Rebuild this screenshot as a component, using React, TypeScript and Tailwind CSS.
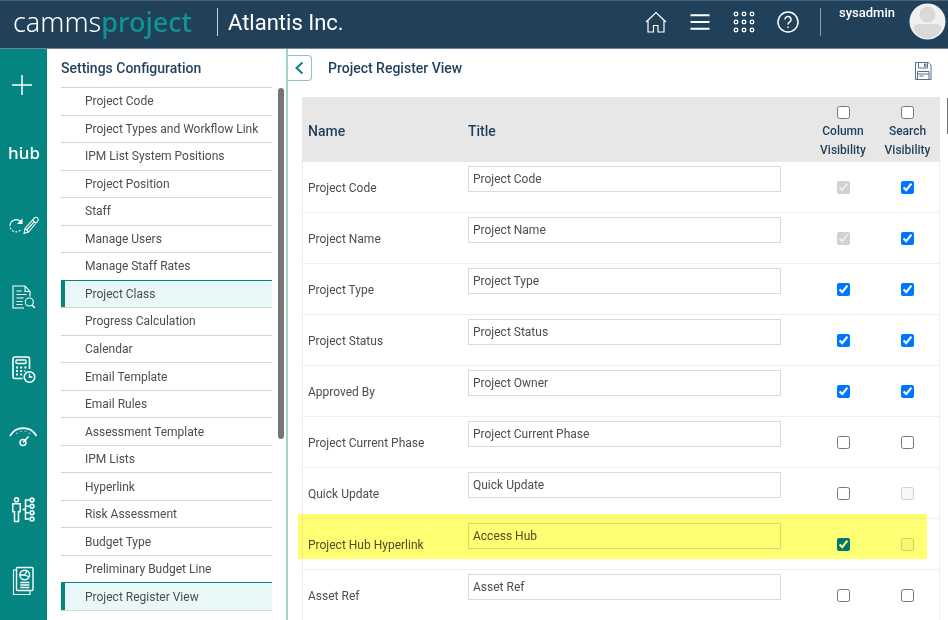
import type { ReactNode } from "react";

type Row = {
  name: string;
  title: string;
  column: boolean;
  search: boolean;
  columnLocked?: boolean;
  searchLocked?: boolean;
  highlighted?: boolean;
};

const SETTINGS = [
  "Project Code",
  "Project Types and Workflow Link",
  "IPM List System Positions",
  "Project Position",
  "Staff",
  "Manage Users",
  "Manage Staff Rates",
  "Project Class",
  "Progress Calculation",
  "Calendar",
  "Email Template",
  "Email Rules",
  "Assessment Template",
  "IPM Lists",
  "Hyperlink",
  "Risk Assessment",
  "Budget Type",
  "Preliminary Budget Line",
  "Project Register View",
];

const ACTIVE = ["Project Class", "Project Register View"];

const ROWS: Row[] = [
  { name: "Project Code", title: "Project Code", column: true, search: true, columnLocked: true },
  { name: "Project Name", title: "Project Name", column: true, search: true, columnLocked: true },
  { name: "Project Type", title: "Project Type", column: true, search: true },
  { name: "Project Status", title: "Project Status", column: true, search: true },
  { name: "Approved By", title: "Project Owner", column: true, search: true },
  { name: "Project Current Phase", title: "Project Current Phase", column: false, search: false },
  { name: "Quick Update", title: "Quick Update", column: false, search: false, searchLocked: true },
  {
    name: "Project Hub Hyperlink",
    title: "Access Hub",
    column: true,
    search: false,
    searchLocked: true,
    highlighted: true,
  },
  { name: "Asset Ref", title: "Asset Ref", column: false, search: false },
];

export default function App() {
  return (
    <div className="flex h-screen flex-col overflow-hidden bg-white font-[Roboto,sans-serif] text-xs text-[#4d4d4d]">
      <TopBar />
      <div className="flex min-h-0 flex-1">
        <IconRail />
        <SettingsMenu />
        <RegisterView />
      </div>
    </div>
  );
}

function TopBar() {
  return (
    <header className="flex h-[49px] shrink-0 items-start border-t border-b border-t-[#47647c] border-b-[#6f8597] bg-[#21405a] text-white">
      <a
        href="#"
        className="ml-[13px] w-[204px] font-['Noto_Sans',sans-serif] text-[27px] leading-[42px]"
      >
        <span className="font-light">camms</span>
        <span className="font-medium text-[#0f9590]">project</span>
      </a>
      <span className="mt-[7px] h-7 w-px bg-[#c5ced6]" />
      <h1 className="ml-[10px] flex-1 text-[22px] leading-[44px]">Atlantis Inc.</h1>

      <nav className="flex h-[42px] items-center gap-5">
        <TopButton label="Home">
          <path d="M2 12 12 2.500 22 12M4 10.500v11.500h5.500v-6.500h4.500v6.500H20V10.500" strokeWidth="1.200" />
        </TopButton>
        <TopButton label="Menu">
          <path d="M2.500 5.300h19M2.500 12h19M2.500 18.700h19" strokeWidth="2" />
        </TopButton>
        <TopButton label="Apps">
          {[4, 12, 20].map((y) =>
            [4, 12, 20].map((x) => <circle key={`${x}-${y}`} cx={x} cy={y} r="1.800" strokeWidth="1.300" />)
          )}
        </TopButton>
        <TopButton label="Help">
          <circle cx="12" cy="12" r="10" strokeWidth="1.500" />
          <path d="M9 9.500a3 3 0 1 1 4.700 2.400c-1.200.8-1.700 1.200-1.700 2.600" strokeWidth="1.500" />
          <circle cx="12" cy="17.200" r=".5" strokeWidth="1" />
        </TopButton>
      </nav>
      <span className="mt-[7px] ml-5 h-7 w-px bg-[#8fa0ae]" />
      <span className="mt-1 ml-[18px] text-[13px] leading-4 font-medium">sysadmin</span>
      <button type="button" aria-label="Account" className="mt-[2px] mr-[2px] ml-[14px]">
        <svg viewBox="0 0 37 37" className="h-[37px] w-[37px]">
          <circle cx="18.500" cy="18.500" r="18" fill="#f0f0f0" />
          <circle cx="18.500" cy="11.500" r="8" fill="#d9d9d9" />
          <path d="M4.500 26c0-3 2.500-5 5.500-5h17c3 0 5.500 2 5.500 5-3 6-8 9.500-14 9.500S7.500 32 4.500 26z" fill="#d9d9d9" />
        </svg>
      </button>
    </header>
  );
}

function TopButton({ label, children }: { label: string; children: ReactNode }) {
  return (
    <button type="button" aria-label={label}>
      <svg viewBox="0 0 24 24" fill="none" stroke="white" className="h-6 w-6">
        {children}
      </svg>
    </button>
  );
}

function IconRail() {
  return (
    <nav className="w-[47px] shrink-0 overflow-hidden bg-[#048581] text-white">
      <RailButton label="Add" first>
        <path d="M5 18h20M15 8v20" strokeWidth="1.500" />
      </RailButton>

      {/* wordmark with a dotted "u" */}
      <button
        type="button"
        className="flex h-[72px] w-full items-center justify-center pl-px font-['Noto_Sans',sans-serif] text-[17px] font-medium"
      >
        <span>h</span>
        <span className="relative">
          u
          <span className="absolute top-[5px] left-px h-[2px] w-[2px] bg-white" />
        </span>
        <span>b</span>
      </button>

      <RailButton label="Edit progress">
        <path d="M3 17a6.200 6.200 0 0 1 10.500-4.500" />
        <path d="M3.200 18.500A6.200 6.200 0 0 0 14 20.500" strokeDasharray="2 1.500" />
        <path d="M15.500 9.500v5.500h-5.500z" fill="white" stroke="none" />
        <path d="m17 24.500 1-5L27.500 9c1-1 2.300-1 3.200 0s.8 2 0 3L21.500 23zM18 19.500l3.500 3.500M25.500 11l3.500 3.500M20 20.500l7.500-8" />
      </RailButton>

      <RailButton label="Search documents">
        <path d="M17 27H6V5h12l5 5.500v5M18 5v5.500h5" />
        <path d="M9.500 10h5M9.500 13.500h10M9.500 17h7M9.500 20.500h6M9.500 23.500h6" />
        <circle cx="22.300" cy="21" r="4" />
        <path d="m25.200 24 2.600 3" strokeWidth="1.500" />
      </RailButton>

      <RailButton label="Timesheets">
        <path d="M15.500 25.500H8a2 2 0 0 1-2-2V6a2 2 0 0 1 2-2h12.500a2 2 0 0 1 2 2v10" strokeWidth="1.600" />
        <rect x="9" y="7" width="10" height="3.500" rx="1" strokeWidth="1.400" />
        <path
          d="M9 14.500h2M13.200 14.500h2M17.400 14.500h2M9 18h2M13.200 18h2M17.400 18h1M9 21.500h2M13.200 21.500h2"
          strokeWidth="2"
        />
        <circle cx="22.500" cy="24" r="5.300" strokeWidth="1.600" />
        <path d="M22.500 20.800V24h3" strokeWidth="1.400" />
      </RailButton>

      <RailButton label="Dashboard">
        <path d="M3 11C9 .5 23.500.5 29.500 11" strokeWidth="1.600" />
        <path d="M9 8.200h2M13 6.300h2M17.500 6.300h2M21.500 8.200h2" opacity=".6" />
        <circle cx="16" cy="17.500" r="3" strokeWidth="1.400" />
        <path d="m16 17.500 5.500-6" strokeWidth="1.400" />
      </RailButton>

      <RailButton label="Resources">
        <circle cx="9.500" cy="2.700" r="2" strokeWidth="1.600" />
        <path d="M5.800 6.800h7.400v8h-1.700v9.700H7.500v-9.700H5.800z" strokeWidth="1.500" />
        <path d="M22 3h-3.500v19H22M18.500 9.300H22M18.500 15.700H22M15.500 12.500h3" strokeWidth="1.500" />
        {[3, 9.3, 15.7, 22].map((y) => (
          <circle key={y} cx="25" cy={y} r="1.900" strokeWidth="1.600" />
        ))}
      </RailButton>

      <RailButton label="Reports">
        <path d="M9.500 1H6.500v24.500h16.500V21.500" />
        <rect x="9.500" y="-1.500" width="16.500" height="23" rx="1" strokeWidth="1.400" />
        <circle cx="17.700" cy="6" r="4.800" strokeWidth="1.400" />
        <path d="M17.700 6 20 1.800M17.700 6l4.500 2M17.700 6h-4.500M13.300 13.500h9M13.300 16h9M13.300 18.500h9" strokeWidth="1.300" />
      </RailButton>
    </nav>
  );
}

function RailButton({ label, first, children }: { label: string; first?: boolean; children: ReactNode }) {
  return (
    <button
      type="button"
      aria-label={label}
      className={`flex w-full items-center justify-center ${first ? "h-[68px]" : "h-[72px]"}`}
    >
      <svg viewBox="0 -4 33 40" fill="none" stroke="white" strokeWidth="1.100" className="h-10 w-[33px]">
        {children}
      </svg>
    </button>
  );
}

function SettingsMenu() {
  return (
    <aside className="flex w-[241px] shrink-0 flex-col border-r-2 border-[#a5d0ce] pl-[14px]">
      <h2 className="py-[9px] text-sm font-medium text-[#1f3f5c]">Settings Configuration</h2>
      <div className="flex min-h-0 flex-1">
        <ul className="grid h-[524px] flex-1 auto-rows-fr border-b border-[#d4d4d4]">
          {SETTINGS.map((s) => (
            <li key={s} className="min-h-0">
              <a
                href="#"
                className={`flex h-full items-center border-t pl-6 ${
                  ACTIVE.includes(s)
                    ? "border-[#048581] bg-[#e8f7f8] shadow-[inset_4px_0_0_#048581]"
                    : "border-[#d4d4d4]"
                }`}
              >
                {s}
              </a>
            </li>
          ))}
        </ul>
        {/* scroll thumb */}
        <div className="mt-px mr-[2px] ml-[6px] h-[351px] w-[6px] rounded-full bg-[#757575]" />
      </div>
    </aside>
  );
}

function RegisterView() {
  return (
    <main className="flex min-w-0 flex-1 flex-col">
      <div className="flex h-12 shrink-0 items-start">
        <button
          type="button"
          aria-label="Collapse menu"
          className="mt-[6px] flex h-[26px] w-6 items-center justify-center rounded-r border border-l-0 border-[#8fc4c2] pr-[2px]"
        >
          <svg viewBox="0 0 10 14" fill="none" stroke="#048581" strokeWidth="2" className="h-[14px] w-[10px]">
            <path d="M8.500 1.500 2.500 7l6 5.500" />
          </svg>
        </button>
        <h2 className="ml-4 flex-1 py-[9px] text-sm font-medium text-[#1f3f5c]">Project Register View</h2>
        <button type="button" aria-label="Save" className="mt-[13px] mr-4">
          <svg viewBox="0 0 18 18" fill="none" stroke="#55728a" className="h-[18px] w-[18px]">
            <path d="M1.500.5h13l2.500 2.500v14.500H1.500z" />
            <path d="M4.500.5v5.500h9V.5M10.500 2v2.500h1.500V2zM3.500 17v-7.500h11.500V17M3.500 12h11.500M5.500 14h4" />
          </svg>
        </button>
      </div>

      <div className="flex min-h-0 flex-1 overflow-hidden">
        <div className="min-w-0 flex-1 pl-[14px]">
          <table className="w-full table-fixed border-separate border-spacing-0">
            <thead>
              <tr className="h-[65px] bg-[#e7e7e7] text-left text-[#1f3f5c]">
                <th className="w-[160px] pt-[2px] pl-[6px] text-sm font-medium">Name</th>
                <th className="pt-[2px] pl-[6px] text-sm font-medium">Title</th>
                <th className="w-16 text-center font-medium">
                  <HeadCheck label="Column Visibility" />
                </th>
                <th className="w-[65px] text-center font-medium">
                  <HeadCheck label="Search Visibility" />
                </th>
              </tr>
            </thead>
            <tbody>
              {ROWS.map((r) => (
                <RegisterRow key={r.name} {...r} />
              ))}
            </tbody>
          </table>
        </div>
        {/* page scroll thumb */}
        <div className="mt-px ml-[7px] h-9 w-px bg-[#757575]" />
      </div>
    </main>
  );
}

function HeadCheck({ label }: { label: string }) {
  return (
    <label className="flex flex-col items-center pt-[6px] text-xs leading-[19px]">
      <input type="checkbox" className="mb-[3px] h-[13px] w-[13px]" />
      {label}
    </label>
  );
}

function RegisterRow({ name, title, column, search, columnLocked, searchLocked, highlighted }: Row) {
  return (
    <tr className="h-[51px]">
      <td className="relative border-b border-l border-[#efefef] pt-[2px] pl-[5px]">
        {name}
        {highlighted && (
          <div className="pointer-events-none absolute -top-[5px] -left-[5px] z-10 h-[45px] w-[calc(100vw-319px)] bg-[#ffff73] mix-blend-multiply" />
        )}
      </td>
      <td className="border-b border-[#efefef] pt-1 pr-[30px] pl-[6px] align-top">
        <input
          type="text"
          aria-label={`${name} title`}
          defaultValue={title}
          className="block h-[26px] w-full border border-[#d3dce4] bg-white pl-1"
        />
      </td>
      <td className="border-b border-[#efefef] align-middle">
        <input
          type="checkbox"
          aria-label={`${name} column visibility`}
          defaultChecked={column}
          disabled={columnLocked}
          className="mx-auto mt-px block h-[13px] w-[13px]"
        />
      </td>
      <td className="border-r border-b border-[#efefef] align-middle">
        <input
          type="checkbox"
          aria-label={`${name} search visibility`}
          defaultChecked={search}
          disabled={searchLocked}
          className="mx-auto mt-px block h-[13px] w-[13px]"
        />
      </td>
    </tr>
  );
}
